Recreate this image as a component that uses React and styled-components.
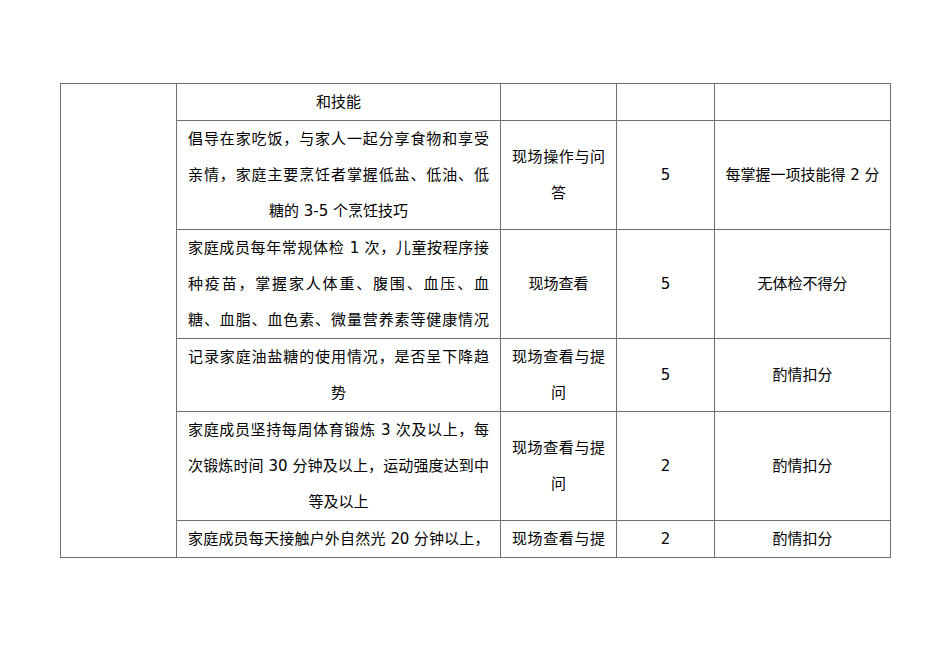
import React from 'react';
import styled, { createGlobalStyle } from 'styled-components';

const GlobalStyle = createGlobalStyle`
  html, body {
    margin: 0;
    padding: 0;
    background: #ffffff;
  }
  body {
    font-family: "DejaVu Sans", "Noto Sans CJK SC", sans-serif;
    color: #000000;
  }
`;

const Page = styled.div`
  width: 950px;
  height: 672px;
  box-sizing: border-box;
  padding: 83px 0 0 60px;
  background: #ffffff;
`;

const Sheet = styled.table`
  border-collapse: collapse;
  table-layout: fixed;
  width: 830px;
`;

const Col = styled.col`
  width: ${(p) => p.$w}px;
`;

const Cell = styled.td`
  border: 1px solid #6f6f6f;
  padding: 0 ${(p) => (p.$narrow ? 6 : 11)}px;
  vertical-align: middle;
  text-align: center;
  font-size: 15px;
  line-height: 36px;
  height: ${(p) => p.$h}px;
  box-sizing: content-box;
`;

// one printed line; $fill stretches it to the cell width like the justified lines of the document
const Line = styled.div`
  white-space: nowrap;
  text-align: ${(p) => (p.$fill ? 'justify' : 'center')};
  text-align-last: ${(p) => (p.$fill ? 'justify' : 'center')};
  text-justify: inter-character;
  letter-spacing: ${(p) => (p.$tight ? '-0.5px' : 'normal')};
`;

const rows = [
  {
    h: 36,
    item: [{ t: '和技能' }],
    method: [],
    score: '',
    rule: '',
  },
  {
    h: 108,
    item: [
      { t: '倡导在家吃饭，与家人一起分享食物和享受', fill: true },
      { t: '亲情，家庭主要烹饪者掌握低盐、低油、低', fill: true },
      { t: '糖的 3-5 个烹饪技巧' },
    ],
    method: [{ t: '现场操作与问', fill: true }, { t: '答' }],
    score: '5',
    rule: '每掌握一项技能得 2 分',
  },
  {
    h: 108,
    item: [
      { t: '家庭成员每年常规体检 1 次，儿童按程序接', fill: true },
      { t: '种疫苗，掌握家人体重、腹围、血压、血', fill: true },
      { t: '糖、血脂、血色素、微量营养素等健康情况', fill: true },
    ],
    method: [{ t: '现场查看' }],
    score: '5',
    rule: '无体检不得分',
  },
  {
    h: 71,
    item: [
      { t: '记录家庭油盐糖的使用情况，是否呈下降趋', fill: true },
      { t: '势' },
    ],
    method: [{ t: '现场查看与提', fill: true }, { t: '问' }],
    score: '5',
    rule: '酌情扣分',
  },
  {
    h: 108,
    item: [
      { t: '家庭成员坚持每周体育锻炼 3 次及以上，每', fill: true },
      { t: '次锻炼时间 30 分钟及以上，运动强度达到中', fill: true },
      { t: '等及以上' },
    ],
    method: [{ t: '现场查看与提', fill: true }, { t: '问' }],
    score: '2',
    rule: '酌情扣分',
  },
  {
    h: 35,
    item: [{ t: '家庭成员每天接触户外自然光 20 分钟以上，', fill: true, tight: true }],
    method: [{ t: '现场查看与提', fill: true }],
    score: '2',
    rule: '酌情扣分',
  },
];

const renderLines = (lines) =>
  lines.map((l, i) => (
    <Line key={i} $fill={l.fill} $tight={l.tight}>
      {l.t}
    </Line>
  ));

export default function App() {
  return (
    <Page>
      <GlobalStyle />
      <Sheet>
        <colgroup>
          <Col $w={116} />
          <Col $w={324} />
          <Col $w={116} />
          <Col $w={98} />
          <Col $w={176} />
        </colgroup>
        <tbody>
          {rows.map((row, i) => (
            <tr key={i}>
              {i === 0 && <Cell rowSpan={rows.length} />}
              <Cell $h={row.h}>{renderLines(row.item)}</Cell>
              <Cell $h={row.h}>{renderLines(row.method)}</Cell>
              <Cell $h={row.h}>{row.score}</Cell>
              <Cell $h={row.h} $narrow>
                {row.rule && <Line>{row.rule}</Line>}
              </Cell>
            </tr>
          ))}
        </tbody>
      </Sheet>
    </Page>
  );
}
